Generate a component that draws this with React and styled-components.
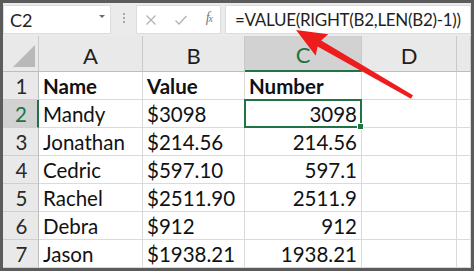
import React from 'react';
import styled, { createGlobalStyle } from 'styled-components';

const Global = createGlobalStyle`
  html, body { margin: 0; padding: 0; background: #5b5b5b; }
  body { font-family: Lato, "Liberation Sans", sans-serif; }
`;

const Frame = styled.div`
  position: relative;
  width: 474px;
  height: 271px;
  box-sizing: border-box;
  padding: 3px;
  background: #5b5b5b;
  overflow: hidden;
`;

const Window = styled.div`
  height: 100%;
  background: #ebebeb;
  display: flex;
  flex-direction: column;
`;

const Toolbar = styled.div`
  height: 33px;
  box-sizing: border-box;
  padding-top: 2px;
  display: flex;
  align-items: flex-start;
`;

const Box = styled.div`
  height: 29px;
  box-sizing: border-box;
  background: #ffffff;
  border: 1px solid #dcdcdc;
  display: flex;
  align-items: center;
`;

const NameBox = styled(Box)`
  width: 108px;
  padding: 0 5px 0 6px;
  justify-content: space-between;
  font-size: 18px;
  color: #222;
`;

const Caret = styled.span`
  width: 0;
  height: 0;
  border-left: 3px solid transparent;
  border-right: 3px solid transparent;
  border-top: 3px solid #6b6b6b;
  margin-top: -6px;
`;

const Grip = styled.div`
  width: 25px;
  height: 29px;
  display: flex;
  flex-direction: column;
  align-items: center;
  justify-content: center;
  gap: 2px;
  padding-bottom: 4px;
  box-sizing: border-box;
`;

const Dot = styled.span`
  width: 2px;
  height: 2px;
  background: #a8a8a8;
`;

const FxBox = styled(Box)`
  width: 85px;
  padding: 0 8px 0 8px;
  justify-content: space-between;
  color: #a6a6a6;
`;

const FxText = styled.span`
  font-family: "Liberation Serif", serif;
  font-style: italic;
  font-size: 14px;
  color: #7a7a7a;
  letter-spacing: -1px;
  margin-top: -4px;
  small { font-size: 10px; }
`;

const FormulaBox = styled(Box)`
  flex: 1;
  min-width: 0;
  margin-left: 4px;
  padding-left: 9px;
  font-size: 17px;
  letter-spacing: -0.3px;
  color: #1f1f1f;
  white-space: nowrap;
  overflow: hidden;
`;

const Sheet = styled.div`
  flex: 1;
  display: grid;
  grid-template-columns: 36px 104px 102px 117px 95px 1fr;
  grid-template-rows: 36px repeat(7, 28px);
  background: #ffffff;
`;

const ColHead = styled.div`
  box-sizing: border-box;
  background: ${p => (p.$active ? '#d2d2d2' : '#e9e9e9')};
  color: ${p => (p.$active ? '#217346' : '#1e1e1e')};
  border-right: 1px solid #c9c9c9;
  border-bottom: ${p => (p.$active ? '2px solid #217346' : '1px solid #bdbdbd')};
  display: flex;
  align-items: center;
  justify-content: center;
  font-size: 22px;
  padding-top: 3px;
`;

const Corner = styled(ColHead)`
  position: relative;
  &::after {
    content: '';
    position: absolute;
    right: 3px;
    bottom: 4px;
    width: 22px;
    height: 22px;
    background: #b9b9b9;
    clip-path: polygon(100% 0, 100% 100%, 0 100%);
  }
`;

const RowHead = styled.div`
  box-sizing: border-box;
  background: ${p => (p.$active ? '#d2d2d2' : '#e9e9e9')};
  color: ${p => (p.$active ? '#217346' : '#2a2a2a')};
  border-right: ${p => (p.$active ? '2px solid #217346' : '1px solid #bdbdbd')};
  border-bottom: 1px solid #cfcfcf;
  display: flex;
  align-items: center;
  justify-content: center;
  font-size: 20.5px;
  padding-left: 2px;
`;

const Cell = styled.div`
  position: relative;
  box-sizing: border-box;
  border-right: 1px solid #dadada;
  border-bottom: 1px solid #dadada;
  display: flex;
  align-items: center;
  justify-content: ${p => (p.$right ? 'flex-end' : 'flex-start')};
  padding: 0 4px 0 4px;
  font-size: 20.5px;
  font-weight: ${p => (p.$bold ? 700 : 400)};
  color: #111;
  white-space: nowrap;
  ${p =>
    p.$selected &&
    `
    z-index: 2;
    &::before {
      content: '';
      position: absolute;
      left: -1px; top: -1px; right: -1px; bottom: -1px;
      border: 2px solid #217346;
    }
    &::after {
      content: '';
      position: absolute;
      right: -3px; bottom: -3px;
      width: 5px; height: 5px;
      background: #217346;
      border: 1px solid #fff;
    }
  `}
`;

const Overlay = styled.svg`
  position: absolute;
  left: 0;
  top: 0;
  pointer-events: none;
`;

const columns = ['A', 'B', 'C', 'D', ''];
const rows = [
  ['Name', 'Value', 'Number'],
  ['Mandy', '$3098', '3098'],
  ['Jonathan', '$214.56', '214.56'],
  ['Cedric', '$597.10', '597.1'],
  ['Rachel', '$2511.90', '2511.9'],
  ['Debra', '$912', '912'],
  ['Jason', '$1938.21', '1938.21'],
];

function Arrow() {
  const tip = [296, 30];
  const tail = [412, 97];
  const dx = tail[0] - tip[0];
  const dy = tail[1] - tip[1];
  const len = Math.hypot(dx, dy);
  const ux = dx / len, uy = dy / len;
  const px = -uy, py = ux;
  const headLen = 30, headHalf = 12.5, shaftHalf = 3.6, tailHalf = 2;
  const bx = tip[0] + ux * headLen, by = tip[1] + uy * headLen;
  const pts = [
    tip,
    [bx + px * headHalf, by + py * headHalf],
    [bx + px * shaftHalf - ux * 3, by + py * shaftHalf - uy * 3],
    [tail[0] + px * tailHalf, tail[1] + py * tailHalf],
    [tail[0] - px * tailHalf, tail[1] - py * tailHalf],
    [bx - px * shaftHalf - ux * 3, by - py * shaftHalf - uy * 3],
    [bx - px * headHalf, by - py * headHalf],
  ];
  return (
    <Overlay width="474" height="271" viewBox="0 0 474 271">
      <polygon points={pts.map(p => p.join(',')).join(' ')} fill="#ee1d1d" />
    </Overlay>
  );
}

export default function App() {
  return (
    <Frame>
      <Global />
      <Window>
        <Toolbar>
          <NameBox>
            <span>C2</span>
            <Caret />
          </NameBox>
          <Grip>
            <Dot />
            <Dot />
            <Dot />
          </Grip>
          <FxBox>
            <svg width="12" height="12" viewBox="0 0 12 12">
              <path d="M1.5 1.5 L10.5 10.5 M10.5 1.5 L1.5 10.5" stroke="#b3b3b3" strokeWidth="1.3" fill="none" />
            </svg>
            <svg width="14" height="12" viewBox="0 0 14 12">
              <path d="M1.5 6.5 L5 10 L12.5 2" stroke="#b3b3b3" strokeWidth="1.3" fill="none" />
            </svg>
            <FxText>f<small>x</small></FxText>
          </FxBox>
          <FormulaBox>=VALUE(RIGHT(B2,LEN(B2)-1))</FormulaBox>
        </Toolbar>
        <Sheet>
          <Corner />
          {columns.map((c, i) => (
            <ColHead key={i} $active={c === 'C'}>{c}</ColHead>
          ))}
          {rows.map((r, ri) => (
            <React.Fragment key={ri}>
              <RowHead $active={ri === 1}>{ri + 1}</RowHead>
              <Cell $bold={ri === 0}>{r[0]}</Cell>
              <Cell $bold={ri === 0}>{r[1]}</Cell>
              <Cell $bold={ri === 0} $right={ri > 0} $selected={ri === 1}>{r[2]}</Cell>
              <Cell />
              <Cell />
            </React.Fragment>
          ))}
        </Sheet>
      </Window>
      <Arrow />
    </Frame>
  );
}
